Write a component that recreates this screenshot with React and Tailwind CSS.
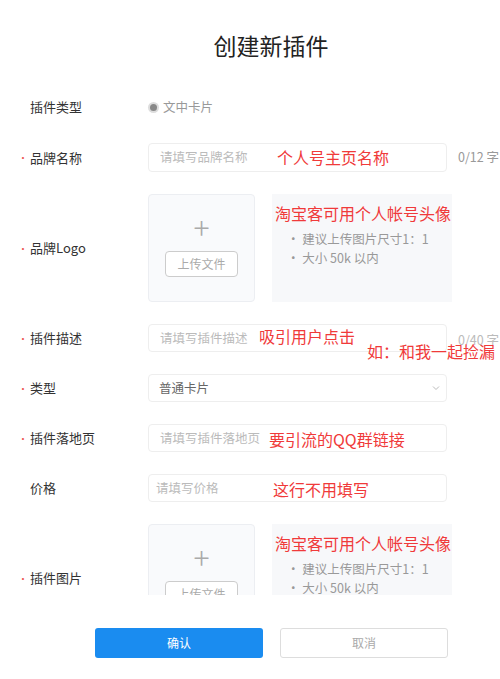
import React from "react";

const font = { fontFamily: '"Noto Sans CJK SC", "Noto Sans", sans-serif' };

function Label({ text, required = true }) {
  return (
    <div className="w-[148px] shrink-0 flex items-center pl-[18px] text-[13px] text-[#333]">
      <span className={`w-[12px] text-[#e55] text-[10px] ${required ? "" : "invisible"}`}>•</span>
      <span>{text}</span>
    </div>
  );
}

function Note({ children, className }) {
  return (
    <span className={`absolute text-[16px] leading-none text-[#f03a3a] whitespace-nowrap ${className}`}>
      {children}
    </span>
  );
}

function Upload() {
  return (
    <div className="flex gap-[17px]">
      <div className="w-[107px] h-[108px] border border-[#eceef2] bg-[#f9fafc] rounded-sm flex flex-col items-center pt-[16px]">
        <span className="text-[30px] leading-none text-[#aaa] font-light">+</span>
        <div className="mt-[10px] w-[73px] h-[26px] border border-[#ccc] rounded-sm bg-white flex items-center justify-center text-[12px] text-[#aaa]">
          上传文件
        </div>
      </div>
      <div className="w-[180px] h-[108px] bg-[#f7f8fa] pl-[3px] pt-[11px]">
        <div className="text-[16px] leading-none text-[#f03a3a] whitespace-nowrap">淘宝客可用个人帐号头像</div>
        <div className="mt-[8px] pl-[12px] text-[12.5px] leading-[19px] text-[#999] whitespace-nowrap">
          <div>• 建议上传图片尺寸1：1</div>
          <div>• 大小 50k 以内</div>
        </div>
      </div>
    </div>
  );
}

export default function App() {
  return (
    <div className="w-[500px] h-[679px] bg-white overflow-hidden" style={font}>
      <div className="h-[595px] overflow-hidden">
        <h1 className="pt-[31px] text-center text-[23px] leading-[28px] text-[#222] pl-[42px]">创建新插件</h1>

        <div className="mt-[34px] flex flex-col gap-[22px]">
          <div className="flex h-[28px]">
            <Label text="插件类型" required={false} />
            <div className="flex items-center gap-[6px] text-[12.5px] text-[#999] pl-[2px]">
              <span className="w-[7px] h-[7px] rounded-full bg-[#888] ring-2 ring-[#ddd]"></span>
              文中卡片
            </div>
          </div>

          <div className="flex h-[29px]">
            <Label text="品牌名称" />
            <div className="relative w-[299px] border border-[#eee] rounded-sm flex items-center pl-[11px] text-[12.5px] text-[#bbb]">
              请填写品牌名称
              <Note className="left-[128px] top-[5px]">个人号主页名称</Note>
            </div>
            <span className="ml-[11px] self-center text-[12.5px] text-[#999] whitespace-nowrap">0/12 字</span>
          </div>

          <div className="flex items-center">
            <Label text="品牌Logo" />
            <Upload />
          </div>

          <div className="flex h-[28px]">
            <Label text="插件描述" />
            <div className="relative w-[299px] border border-[#eee] rounded-sm flex items-center pl-[11px] text-[12.5px] text-[#bbb]">
              请填写插件描述
              <Note className="left-[110px] top-[3px]">吸引用户点击</Note>
              <Note className="left-[218px] top-[18px]">如：和我一起捡漏</Note>
            </div>
            <span className="ml-[11px] mt-[7px] text-[12.5px] text-[#bbb] whitespace-nowrap">0/40 字</span>
          </div>

          <div className="flex h-[28px]">
            <Label text="类型" />
            <div className="w-[299px] border border-[#eee] rounded-sm flex items-center justify-between pl-[10px] pr-[6px] text-[12.5px] text-[#666]">
              普通卡片
              <svg width="8" height="6" viewBox="0 0 8 6">
                <path d="M1 1.5 L4 4.5 L7 1.5" fill="none" stroke="#bbb" strokeWidth="1" />
              </svg>
            </div>
          </div>

          <div className="flex h-[28px]">
            <Label text="插件落地页" />
            <div className="relative w-[299px] border border-[#eee] rounded-sm flex items-center pl-[11px] text-[12.5px] text-[#bbb]">
              请填写插件落地页
              <Note className="left-[120px] top-[6px]">要引流的QQ群链接</Note>
            </div>
          </div>

          <div className="flex h-[28px]">
            <Label text="价格" required={false} />
            <div className="relative w-[299px] border border-[#eee] rounded-sm flex items-center pl-[7px] text-[12.5px] text-[#bbb]">
              请填写价格
              <Note className="left-[124px] top-[6px]">这行不用填写</Note>
            </div>
          </div>

          <div className="flex items-center">
            <Label text="插件图片" />
            <Upload />
          </div>
        </div>
      </div>

      <div className="flex gap-[17px] pl-[95px] pt-[33px]">
        <button className="w-[168px] h-[30px] rounded-[3px] bg-[#1a8cf0] text-white text-[12px]">确认</button>
        <button className="w-[168px] h-[30px] rounded-[3px] border border-[#ddd] bg-white text-[#aaa] text-[12px]">取消</button>
      </div>
    </div>
  );
}
